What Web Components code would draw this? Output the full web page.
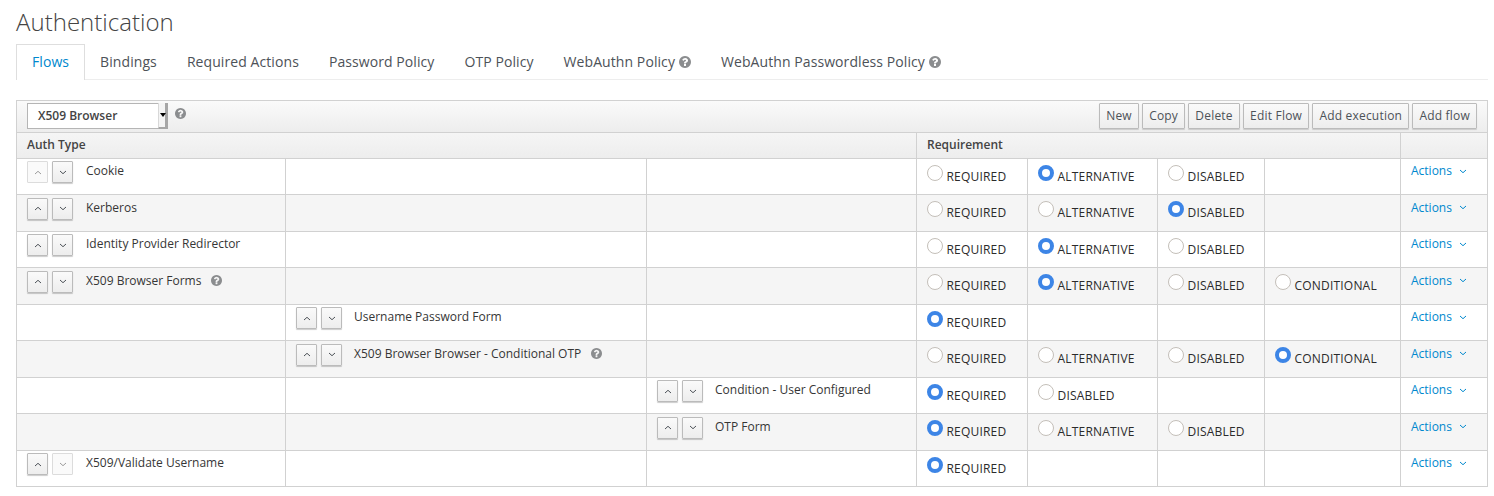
<!DOCTYPE html>
<html><head><meta charset="utf-8"><title>Authentication</title>
<style>
html,body{margin:0;padding:0;background:#fff}
body{font-family:"Open Sans","Noto Sans",sans-serif;font-size:12px;color:#363636;line-height:20px}
</style></head><body>
<kc-page></kc-page>
<script>
const HELP=(s=12)=>`<svg width="${s}" height="${s}" viewBox="128 128 1536 1536" style="display:block"><path fill="#8b8d8f" d="M1024 1376v-192q0-14-9-23t-23-9h-192q-14 0-23 9t-9 23v192q0 14 9 23t23 9h192q14 0 23-9t9-23zm256-672q0-88-55.500-163t-138.500-116-170-41q-243 0-371 213-15 24 8 42l132 100q7 6 19 6 16 0 25-12 53-68 86-92 34-24 86-24 48 0 85.500 26t37.500 59q0 38-20 61t-68 45q-63 28-115.500 86.500t-52.500 125.500v36q0 14 9 23t23 9h192q14 0 23-9t9-23q0-19 21.500-49.500t54.500-49.500q32-18 49-28.500t46-35 44.500-48 28-60.500 12.500-81zm384 192q0 209-103 385.500t-279.500 279.500-385.500 103-385.500-103-279.500-279.500-103-385.500 103-385.500 279.500-279.500 385.500-103 385.500 103 279.500 279.500 103 385.500z"/></svg>`;
const CHEV=(d,c='#4d5258')=>`<svg width="8" height="5" viewBox="0 0 8 5" style="display:block"><path d="${d==='up'?'M1 4L4 1.300L7 4':'M1 1L4 3.700L7 1'}" fill="none" stroke="${c}" stroke-width="1"/></svg>`;

class KcHelp extends HTMLElement{constructor(){super();const s=+(this.getAttribute('size')||12);this.attachShadow({mode:'open'}).innerHTML=`<style>:host{display:inline-block;flex:none;width:${s}px;height:${s}px}</style>${HELP(s)}`}}
customElements.define('kc-help',KcHelp);

class KcTab extends HTMLElement{constructor(){super();this.attachShadow({mode:'open'}).innerHTML=`<style>
:host{display:flex;align-items:center;gap:4px;height:35px;padding:0 15px;color:#4d5258;font-size:14px;letter-spacing:.08px;white-space:nowrap}
:host([active]){color:#0088ce;border:1px solid #dedede;border-bottom:0;background:#fff;margin-bottom:-1px;height:36px;box-sizing:border-box;padding-bottom:1px}
</style><slot></slot>`}}
customElements.define('kc-tab',KcTab);

class KcTabs extends HTMLElement{constructor(){super();this.attachShadow({mode:'open'}).innerHTML=`<style>
:host{display:flex;align-items:flex-end;height:35px;border-bottom:1px solid #ededed}
</style><slot></slot>`}}
customElements.define('kc-tabs',KcTabs);

class KcBtn extends HTMLElement{constructor(){super();this.attachShadow({mode:'open'}).innerHTML=`<style>
:host{display:flex;align-items:center;justify-content:center;box-sizing:border-box;height:26px;padding:0 6px;border:1px solid #bbb;border-radius:1px;background:linear-gradient(#fafafa,#ededed);color:#4d5258;font-size:12px;letter-spacing:.2px;white-space:nowrap;box-shadow:0 1px 1px rgba(3,3,3,.15)}
</style><slot></slot>`}}
customElements.define('kc-btn',KcBtn);

class KcMove extends HTMLElement{constructor(){super();
const dis=(this.getAttribute('disabled')||'');
const b=(d)=>{const off=dis===d;return `<span class="b ${off?'off':''}">${CHEV(d,off?'#9c9c9c':'#4d5258')}</span>`};
this.attachShadow({mode:'open'}).innerHTML=`<style>
:host{display:inline-flex;gap:4px;flex:none}
.b{box-sizing:border-box;width:21px;height:22px;display:flex;align-items:center;justify-content:center;border:1px solid #bbb;border-radius:1px;background:linear-gradient(#fafafa,#ededed);box-shadow:0 1px 1px rgba(3,3,3,.2)}
.off{border-color:#dcdcdc;background:#fafafa;box-shadow:none}
</style>${b('up')}${b('down')}`}}
customElements.define('kc-move',KcMove);

class KcRadio extends HTMLElement{constructor(){super();
this.attachShadow({mode:'open'}).innerHTML=`<style>
:host{display:flex;align-items:flex-start;font-size:12px;letter-spacing:.2px;color:#2b2b2b;white-space:nowrap;padding-top:6px}
.r{box-sizing:border-box;width:16px;height:16px;border-radius:50%;border:1px solid #c4bfb9;background:#fff;flex:none;margin-right:3.500px}
:host([checked]) .r{border:4.500px solid #3d85e6}
.t{margin-top:2px}
</style><span class="r"></span><span class="t"><slot></slot></span>`}}
customElements.define('kc-radio',KcRadio);

class KcActions extends HTMLElement{constructor(){super();this.attachShadow({mode:'open'}).innerHTML=`<style>
:host{display:inline-flex;align-items:center;gap:7px;color:#0088ce;font-size:12px}
</style>Actions ${CHEV('down','#0088ce')}`}}
customElements.define('kc-actions',KcActions);

class KcRow extends HTMLElement{
 constructor(){super();
 const d=JSON.parse(this.getAttribute('data'));
 const L=d.level,cells=[];
 for(let i=0;i<3;i++){
  cells.push(i===L?`<div class="c n"><kc-move disabled="${d.dis||''}"></kc-move><span class="name" style="margin-left:${L?12:13}px">${d.name}</span>${d.help?'<kc-help class="h" size="11"></kc-help>':''}</div>`:'<div class="c"></div>');
 }
 const opts=d.opts;
 for(let i=0;i<4;i++){
  const o=opts[i];
  cells.push(`<div class="c o">${o?`<kc-radio ${o===d.on?'checked':''}>${o}</kc-radio>`:''}</div>`);
 }
 cells.push('<div class="c a"><kc-actions></kc-actions></div>');
 this.attachShadow({mode:'open'}).innerHTML=`<style>
:host{display:grid;grid-template-columns:269px 361px 270px 111px 130px 107px 136px 87px;height:36.5px;box-sizing:border-box;border-bottom:1px solid #d1d1d1;background:${d.alt?'#f5f5f5':'#fff'}}
.c{box-sizing:border-box;border-right:1px solid #d1d1d1;padding:0 10px;min-width:0}
.c:last-child{border-right:0}
.n{display:flex;align-items:flex-start;padding-top:2.500px}
.name{color:#363636;white-space:nowrap;margin-top:-.300px}
.h{margin:4.500px 0 0 10px}
.a{padding-top:2.200px}
.o{padding-left:10px}
</style>${cells.join('')}`;
 }
}
customElements.define('kc-row',KcRow);

class KcHeader extends HTMLElement{constructor(){super();this.attachShadow({mode:'open'}).innerHTML=`<style>
:host{display:grid;grid-template-columns:900px 484px 87px;height:25.900px;box-sizing:border-box;background:linear-gradient(#f5f5f5,#ededed);border-bottom:1px solid #d1d1d1;font-weight:600;color:#444}
div{box-sizing:border-box;padding:0 10px;border-right:1px solid #d1d1d1;line-height:24px;font-size:12px}
div:last-child{border-right:0}
</style><div>Auth Type</div><div>Requirement</div><div></div>`}}
customElements.define('kc-header',KcHeader);

class KcToolbar extends HTMLElement{constructor(){super();this.attachShadow({mode:'open'}).innerHTML=`<style>
:host{display:flex;align-items:flex-start;height:32px;box-sizing:border-box;background:linear-gradient(#fafafa,#ededed);border-bottom:1px solid #d1d1d1;padding:2px 10px}
.sel{display:flex;box-sizing:border-box;width:141px;height:25.500px;border:1px solid #b5b5b5;background:#fff;font-weight:600;font-size:12px;color:#444;line-height:23px;padding-left:10px;position:relative}
.arrow{position:absolute;right:-1px;top:-1px;bottom:-1px;width:10px;box-sizing:border-box;background:#f4f4f4;border-left:1px solid #d8d8d8;border-right:3px solid #a6a6a6;border-bottom:2px solid #a6a6a6;display:flex;align-items:center;justify-content:center}
.arrow i{display:block;width:0;height:0;border:3px solid transparent;border-top:4px solid #000;border-bottom:0;margin-left:1px}
kc-help{margin:5px 0 0 7px}
.sp{flex:1}
.btns{display:flex;gap:3.300px}
</style><div class="sel">X509 Browser<span class="arrow"><i></i></span></div><kc-help size="11"></kc-help><span class="sp"></span><div class="btns"><slot></slot></div>`}}
customElements.define('kc-toolbar',KcToolbar);

class KcFlowTable extends HTMLElement{constructor(){super();this.attachShadow({mode:'open'}).innerHTML=`<style>
:host{display:block;width:1472px;box-sizing:border-box;border:1px solid #d1d1d1;border-bottom:0}
</style><slot></slot>`}}
customElements.define('kc-flow-table',KcFlowTable);

class KcPage extends HTMLElement{constructor(){super();
const R3=['REQUIRED','ALTERNATIVE','DISABLED'],R4=[...R3,'CONDITIONAL'];
const rows=[
 {level:0,name:'Cookie',opts:R3,on:'ALTERNATIVE',dis:'up'},
 {level:0,name:'Kerberos',opts:R3,on:'DISABLED',alt:1},
 {level:0,name:'Identity Provider Redirector',opts:R3,on:'ALTERNATIVE'},
 {level:0,name:'X509 Browser Forms',help:1,opts:R4,on:'ALTERNATIVE',alt:1},
 {level:1,name:'Username Password Form',opts:['REQUIRED'],on:'REQUIRED'},
 {level:1,name:'X509 Browser Browser - Conditional OTP',help:1,opts:R4,on:'CONDITIONAL',alt:1},
 {level:2,name:'Condition - User Configured',opts:['REQUIRED','DISABLED'],on:'REQUIRED'},
 {level:2,name:'OTP Form',opts:R3,on:'REQUIRED',alt:1},
 {level:0,name:'X509/Validate Username',opts:['REQUIRED'],on:'REQUIRED',dis:'down'}
];
const tabs=['Flows','Bindings','Required Actions','Password Policy','OTP Policy','WebAuthn Policy','WebAuthn Passwordless Policy'];
this.attachShadow({mode:'open'}).innerHTML=`<style>
:host{display:block;padding:0 6px 0 16px;width:1472px}
h1{margin:0;font-weight:300;font-size:24px;letter-spacing:.03px;line-height:44px;color:#444;height:44px}
kc-tabs{margin-bottom:20px}
</style>
<h1>Authentication</h1>
<kc-tabs>${tabs.map((t,i)=>`<kc-tab ${i==0?'active':''}>${t}${i>4?'<kc-help></kc-help>':''}</kc-tab>`).join('')}</kc-tabs>
<kc-flow-table>
<kc-toolbar>${['New','Copy','Delete','Edit Flow','Add execution','Add flow'].map(b=>`<kc-btn>${b}</kc-btn>`).join('')}</kc-toolbar>
<kc-header></kc-header>
${rows.map(r=>`<kc-row data='${JSON.stringify(r)}'></kc-row>`).join('')}
</kc-flow-table>`;
}}
customElements.define('kc-page',KcPage);
</script>
</body></html>
